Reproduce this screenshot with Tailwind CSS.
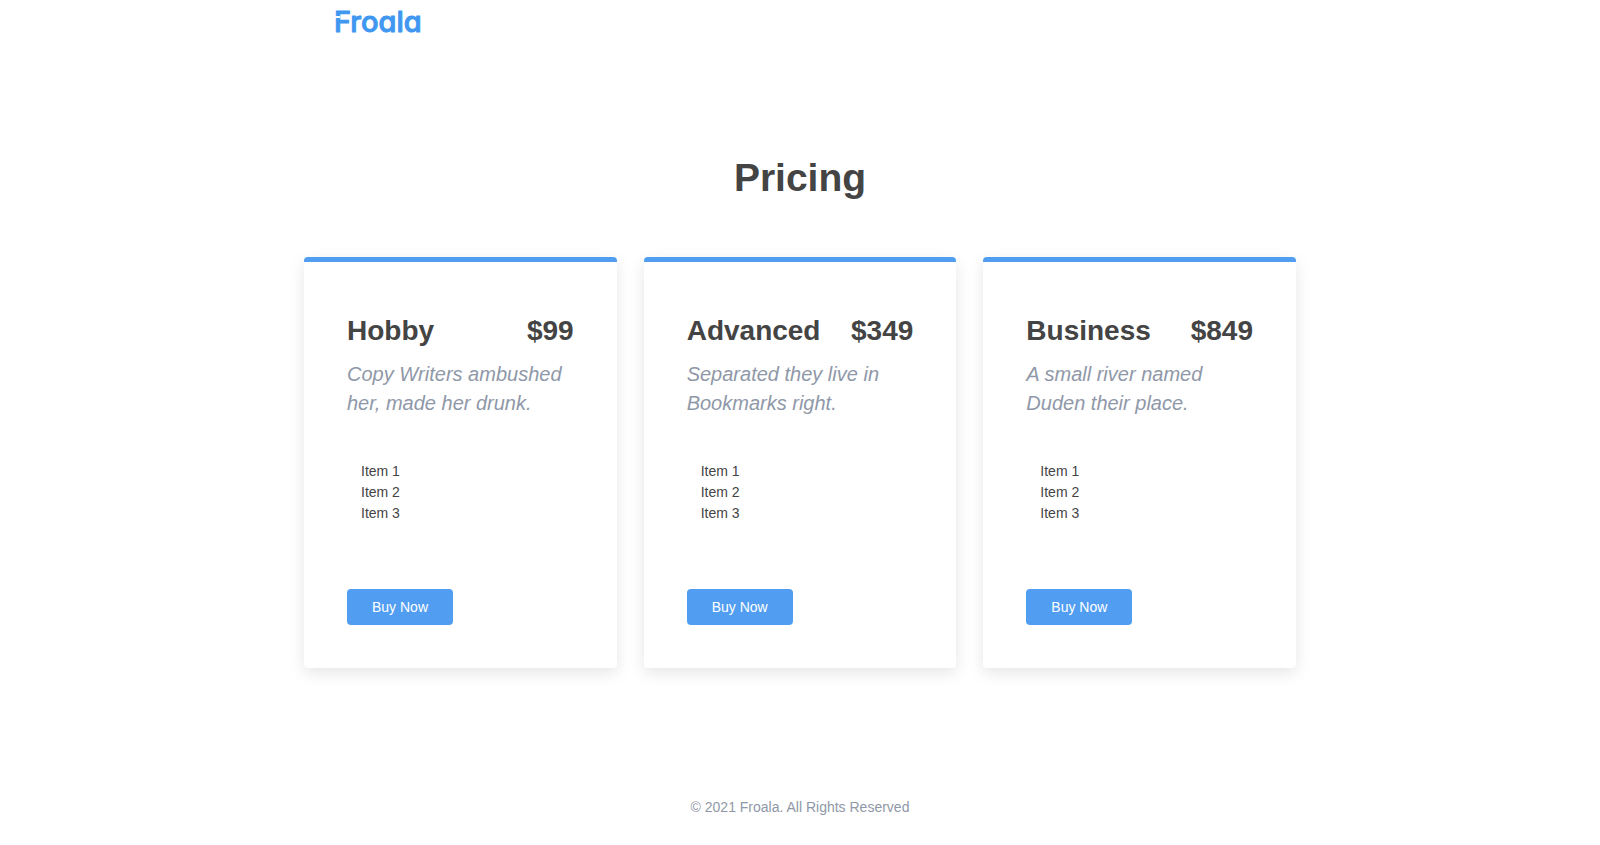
<!DOCTYPE html>
<html lang="en">
<head>
    <meta charset="UTF-8">
    <meta name="viewport" content="width=device-width, initial-scale=1.0">
    <title>Froala Pricing</title>
    <script src="https://cdn.jsdelivr.net/npm/@tailwindcss/browser@4"></script>
</head>
<body class="bg-white text-[#444444] text-sm font-['Liberation_Sans',Arial,sans-serif]">

    <header class="mx-auto max-w-[992px] px-[30px]">
        <a href="#" aria-label="Froala" class="inline-block align-top">
            <svg class="block h-11 w-[100px]" viewBox="0 0 100 44">
                <text x="0" y="32" fill="#4097f1" stroke="#4097f1" stroke-width="1" stroke-linejoin="round" font-size="29" font-weight="500" class="font-['Inter',sans-serif] [font-feature-settings:'cv11']">Froala</text>
                <!-- notch in the stem of the F -->
                <rect x="0" y="16" width="6" height="2" fill="#ffffff" />
            </svg>
        </a>
    </header>

    <main class="mx-auto max-w-[992px] pt-[104px]">
        <h1 class="text-center text-[39px] leading-[60px] font-bold">Pricing</h1>

        <div class="mt-[49px] grid grid-cols-1 md:grid-cols-3 gap-[27px]">

            <section class="rounded border-t-[5px] border-[#519df1] bg-white p-[43px] shadow-[0_5px_16px_rgba(0,0,0,0.1)]">
                <div class="flex justify-between text-[28px] leading-[52px] font-bold">
                    <h2>Hobby</h2>
                    <p>$99</p>
                </div>
                <p class="mt-[3px] text-xl leading-[29px] italic text-[#8f98a8]">Copy Writers ambushed her, made her drunk.</p>
                <ul class="mt-[43px] pl-3.5 leading-[21px]">
                    <li>Item 1</li>
                    <li>Item 2</li>
                    <li>Item 3</li>
                </ul>
                <button type="button" class="mt-[65px] block h-9 rounded bg-[#519df1] px-[25px] text-white">Buy Now</button>
            </section>

            <section class="rounded border-t-[5px] border-[#519df1] bg-white p-[43px] shadow-[0_5px_16px_rgba(0,0,0,0.1)]">
                <div class="flex justify-between text-[28px] leading-[52px] font-bold">
                    <h2>Advanced</h2>
                    <p>$349</p>
                </div>
                <p class="mt-[3px] text-xl leading-[29px] italic text-[#8f98a8]">Separated they live in Bookmarks right.</p>
                <ul class="mt-[43px] pl-3.5 leading-[21px]">
                    <li>Item 1</li>
                    <li>Item 2</li>
                    <li>Item 3</li>
                </ul>
                <button type="button" class="mt-[65px] block h-9 rounded bg-[#519df1] px-[25px] text-white">Buy Now</button>
            </section>

            <section class="rounded border-t-[5px] border-[#519df1] bg-white p-[43px] shadow-[0_5px_16px_rgba(0,0,0,0.1)]">
                <div class="flex justify-between text-[28px] leading-[52px] font-bold">
                    <h2>Business</h2>
                    <p>$849</p>
                </div>
                <p class="mt-[3px] text-xl leading-[29px] italic text-[#8f98a8]">A small river named Duden their place.</p>
                <ul class="mt-[43px] pl-3.5 leading-[21px]">
                    <li>Item 1</li>
                    <li>Item 2</li>
                    <li>Item 3</li>
                </ul>
                <button type="button" class="mt-[65px] block h-9 rounded bg-[#519df1] px-[25px] text-white">Buy Now</button>
            </section>

        </div>
    </main>

    <footer class="mt-[129px] pb-6 text-center leading-[21px] text-[#8f98a8]">
        <p>© 2021 Froala. All Rights Reserved</p>
    </footer>

</body>
</html>
